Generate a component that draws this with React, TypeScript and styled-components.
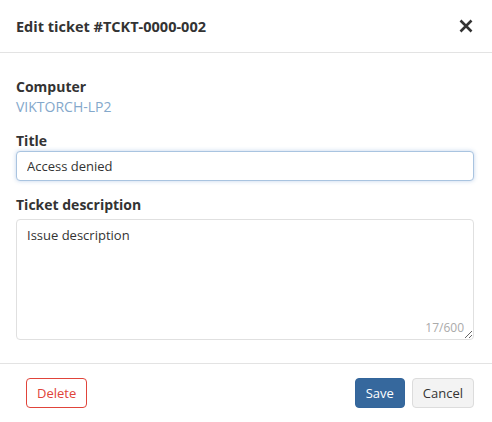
import React, { useState } from "react";
import styled, { createGlobalStyle } from "styled-components";

const GlobalStyle = createGlobalStyle`
  html, body {
    margin: 0;
    padding: 0;
    background: #fff;
  }
  body {
    font-family: "Open Sans", "Liberation Sans", sans-serif;
    color: #333;
  }
  * {
    box-sizing: border-box;
  }
`;

const Dialog = styled.div`
  width: 492px;
  height: 422px;
  display: flex;
  flex-direction: column;
  background: #fff;
`;

const Header = styled.div`
  height: 53px;
  display: flex;
  align-items: center;
  justify-content: space-between;
  padding: 0 18px 0 16px;
  border-bottom: 1px solid #e3e3e3;
`;

const HeaderTitle = styled.h2`
  margin: 0;
  font-size: 14.5px;
  font-weight: 700;
  color: #333;
`;

const CloseButton = styled.button`
  border: 0;
  background: none;
  padding: 0;
  width: 16px;
  height: 16px;
  display: flex;
  align-items: center;
  justify-content: center;
  cursor: pointer;
  color: #333;
`;

const Body = styled.div`
  flex: 1;
  display: flex;
  flex-direction: column;
  padding: 24px 18px 0 16px;
  border-bottom: 1px solid #e3e3e3;
`;

const Field = styled.div`
  display: flex;
  flex-direction: column;
  margin-bottom: 14px;
`;

const Label = styled.label<{ $gap?: number }>`
  font-size: 14px;
  font-weight: 700;
  color: #333;
  line-height: 20px;
  margin-bottom: ${({ $gap }) => $gap ?? 0}px;
`;

const Value = styled.span`
  font-size: 14px;
  color: #84a8cb;
  line-height: 20px;
`;

const TextInput = styled.input`
  height: 30px;
  width: 100%;
  border: 1px solid #a9c4e0;
  border-radius: 4px;
  padding: 0 10px;
  font-family: inherit;
  font-size: 13px;
  color: #333;
  outline: none;
  box-shadow: 0 0 4px rgba(120, 160, 210, 0.45);
`;

const AreaWrap = styled.div`
  position: relative;
`;

const TextArea = styled.textarea`
  display: block;
  width: 100%;
  height: 121px;
  border: 1px solid #e0e0e0;
  border-radius: 4px;
  padding: 6px 10px;
  font-family: inherit;
  font-size: 13px;
  color: #333;
  outline: none;
  resize: both;
`;

const Counter = styled.span`
  position: absolute;
  right: 10px;
  bottom: 4px;
  font-size: 12px;
  color: #aaa;
  pointer-events: none;
`;

const Footer = styled.div`
  height: 58px;
  display: flex;
  align-items: center;
  justify-content: space-between;
  padding: 0 18px 0 26px;
`;

const ButtonGroup = styled.div`
  display: flex;
  gap: 7px;
`;

type Variant = "danger" | "primary" | "default";

const Button = styled.button<{ $variant: Variant }>`
  height: 30px;
  padding: 0 10px;
  border-radius: 4px;
  font-family: inherit;
  font-size: 13px;
  cursor: pointer;
  border: 1px solid
    ${({ $variant }) =>
      $variant === "danger" ? "#e0443a" : $variant === "primary" ? "#33659b" : "#dcdcdc"};
  background: ${({ $variant }) =>
    $variant === "primary" ? "#36689d" : $variant === "default" ? "#f3f3f3" : "#fff"};
  color: ${({ $variant }) =>
    $variant === "danger" ? "#e0443a" : $variant === "primary" ? "#fff" : "#333"};
`;

const App = () => {
  const [title, setTitle] = useState("Access denied");
  const [desc, setDesc] = useState("Issue description");

  return (
    <Dialog>
      <GlobalStyle />
      <Header>
        <HeaderTitle>Edit ticket #TCKT-0000-002</HeaderTitle>
        <CloseButton aria-label="Close">
          <svg width="14" height="14" viewBox="0 0 14 14">
            <path d="M1.5 1.5 L12.5 12.5 M12.5 1.5 L1.5 12.5" stroke="#333" strokeWidth="2.6" strokeLinecap="butt" />
          </svg>
        </CloseButton>
      </Header>
      <Body>
        <Field>
          <Label>Computer</Label>
          <Value>VIKTORCH-LP2</Value>
        </Field>
        <Field>
          <Label>Title</Label>
          <TextInput value={title} onChange={(e) => setTitle(e.target.value)} />
        </Field>
        <Field>
          <Label $gap={4}>Ticket description</Label>
          <AreaWrap>
            <TextArea value={desc} onChange={(e) => setDesc(e.target.value)} />
            <Counter>{desc.length}/600</Counter>
          </AreaWrap>
        </Field>
      </Body>
      <Footer>
        <Button $variant="danger">Delete</Button>
        <ButtonGroup>
          <Button $variant="primary">Save</Button>
          <Button $variant="default">Cancel</Button>
        </ButtonGroup>
      </Footer>
    </Dialog>
  );
};

export default App;
